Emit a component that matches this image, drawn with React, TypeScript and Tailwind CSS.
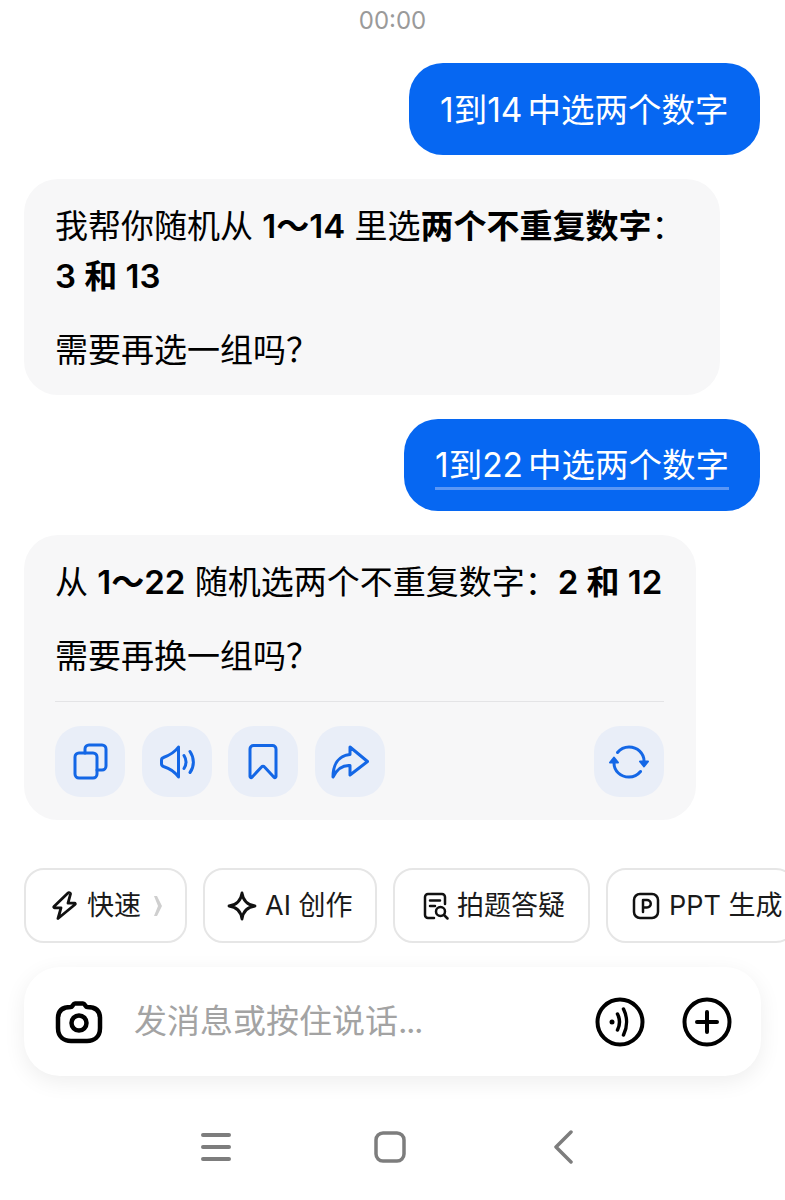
import React from "react";

const font = { fontFamily: '"Inter","Noto Sans CJK SC",sans-serif' };

const S = ({ children }: { children: React.ReactNode }) => (
  <svg width="40" height="40" viewBox="0 0 40 40" fill="none" stroke="#1467e6" strokeWidth="3" strokeLinecap="round" strokeLinejoin="round">
    {children}
  </svg>
);

const Action = ({ children }: { children: React.ReactNode }) => (
  <div className="w-[70px] h-[71px] rounded-[26px] bg-[#e9eef8] flex items-center justify-center">{children}</div>
);

const Chip = ({ icon, label, extra, cls }: { icon: React.ReactNode; label: string; extra?: React.ReactNode; cls: string }) => (
  <div className={`shrink-0 h-[75px] rounded-[20px] border-2 border-[#e6e6e6] bg-white flex items-center text-[27px] text-[#1a1a1a] ${cls}`}>
    {icon}
    <span className="whitespace-nowrap pt-[2px]">{label}</span>
    {extra}
  </div>
);

export default function App() {
  return (
    <div style={font} className="w-[785px] h-[1200px] bg-white overflow-hidden flex flex-col text-black">
      <div className="h-[41px] pt-[4px] text-center text-[24px] leading-[33px] text-[#9a9a9a]">00:00</div>

      <div className="flex justify-end pr-[25px] mt-[22px]">
        <div className="h-[92px] w-[351px] rounded-[34px] bg-[#0667f2] text-white text-[33.5px] pt-[2px] flex items-center pl-[31px] whitespace-nowrap">
          <span>1到14</span><span className="ml-[5px]">中选两个数字</span>
        </div>
      </div>

      <div className="ml-[24px] mt-[24px] w-[696px] h-[216px] rounded-[34px] bg-[#f7f7f8] pl-[31px] pt-[22px] text-[33px] leading-[50px]">
        <div className="whitespace-nowrap">我帮你随机从 <b className="font-semibold">1～14</b> 里选<b className="font-semibold">两个不重复数字</b>：</div>
        <div className="font-semibold">3 和 13</div>
        <div className="mt-[24px]">需要再选一组吗？</div>
      </div>

      <div className="flex justify-end pr-[25px] mt-[24px]">
        <div className="h-[92px] w-[356px] rounded-[34px] bg-[#0667f2] text-white text-[33.5px] flex items-center pl-[31px] whitespace-nowrap">
          <span className="border-b-[3px] border-[#5b97f5] leading-[44px] pt-[3px]">
            <span>1到22</span><span className="ml-[5px]">中选两个数字</span>
          </span>
        </div>
      </div>

      <div className="ml-[24px] mt-[24px] w-[672px] h-[285px] rounded-[34px] bg-[#f7f7f8] pl-[31px] pr-[32px] pt-[22px] text-[33px] leading-[50px]">
        <div className="whitespace-nowrap">从 <b className="font-semibold">1～22</b> 随机选两个不重复数字：<b className="font-semibold">2 和 12</b></div>
        <div className="mt-[24px]">需要再换一组吗？</div>
        <div className="h-px bg-[#e4e4e6] mt-[20px]" />
        <div className="flex justify-between mt-[24px]">
          <div className="flex gap-[16.5px]">
            <Action>
              <S>
                <rect x="5" y="11" width="22" height="25" rx="4" />
                <path d="M15 11V7a4 4 0 0 1 4-4h13a4 4 0 0 1 4 4v17a4 4 0 0 1-4 4h-5" />
              </S>
            </Action>
            <Action>
              <S>
                <path d="M21.500 5v30c-3.500-5-7-8-15-10.500a3 3 0 0 1-2-3v-3a3 3 0 0 1 2-3C13 13 18 10 21.500 5Z" />
                <path d="M27 13.500c2.500 4 2.500 9 0 13" />
                <path d="M33 9.500c4.500 6.500 4.500 15 0 21" />
              </S>
            </Action>
            <Action>
              <S>
                <path d="M7 7a3.500 3.500 0 0 1 3.500-3.500h19A3.500 3.500 0 0 1 33 7v27.500c0 1.200-1.200 1.500-2 .7L21.500 25a2 2 0 0 0-3 0L9 35.200c-.8.8-2 .5-2-.7Z" />
              </S>
            </Action>
            <Action>
              <S>
                <path d="M20 5l17.500 14.500L20 33V23.500C13 23 7 27 3 35 3 22 9 13.500 20 12.500Z" />
              </S>
            </Action>
          </div>
          <Action>
            <S>
              <path d="M8.500 10.500C11.500 6.800 15.500 5 20 5c8.500 0 15 6.500 15 14" />
              <path d="M5 21c0 8 6.500 14 15 14 4.500 0 8.500-1.800 11.500-5.500" />
              <path d="M31 19.500h8L35 24.500Z" fill="#1467e6" strokeWidth="2" />
              <path d="M1 20.500h8L5 15.500Z" fill="#1467e6" strokeWidth="2" />
            </S>
          </Action>
        </div>
      </div>

      <div className="flex gap-[16px] pl-[24px] mt-[48px] overflow-hidden">
        <Chip
          cls="w-[163px] pl-[24px]"
          label="快速"
          icon={
            <svg className="mr-[7px]" width="30" height="30" viewBox="0 0 30 30" fill="none" stroke="#111" strokeWidth="2.800" strokeLinejoin="round" strokeLinecap="round">
              <path d="M18 2 4 15.500c-.5.5-.2 1.300.5 1.300H11L8 27.500 25 13.500c.6-.5.3-1.300-.4-1.300H18L20.500 3C20.700 2 18.800 1.300 18 2Z" />
            </svg>
          }
          extra={
            <svg className="ml-[12px]" width="10" height="22" viewBox="0 0 10 22" fill="#cfcfcf">
              <path d="M1 1h3l5 10-5 10H1l4-10Z" />
            </svg>
          }
        />
        <Chip
          cls="w-[174px] pl-[22px]"
          label="AI 创作"
          icon={
            <svg className="mr-[8px]" width="30" height="30" viewBox="0 0 30 30" fill="none" stroke="#111" strokeWidth="2.800" strokeLinejoin="round" strokeLinecap="round">
              <path d="M15 2c1 7 5 12 13 13-8 1-12 6-13 13-1-7-5-12-13-13 8-1 12-6 13-13Z" />
            </svg>
          }
        />
        <Chip
          cls="w-[197px] pl-[27px]"
          label="拍题答疑"
          icon={
            <svg className="mr-[7px]" width="28" height="30" viewBox="0 0 28 30" fill="none" stroke="#111" strokeWidth="2.500" strokeLinejoin="round" strokeLinecap="round">
              <path d="M12 27H6a3 3 0 0 1-3-3V6a3 3 0 0 1 3-3h14a3 3 0 0 1 3 3v7" />
              <path d="M8 9.500h10M8 15h5" />
              <circle cx="18.500" cy="20.500" r="4.500" />
              <path d="M22 24l3.500 3.500" />
            </svg>
          }
        />
        <Chip
          cls="w-[190px] pl-[24px]"
          label="PPT 生成"
          icon={
            <svg className="mr-[9px]" width="28" height="28" viewBox="0 0 28 28" fill="none" stroke="#111" strokeWidth="2.500" strokeLinejoin="round" strokeLinecap="round">
              <rect x="2" y="2" width="24" height="24" rx="6" />
              <path d="M11 20V8h4a3.500 3.500 0 0 1 0 7.500h-4" />
            </svg>
          }
        />
      </div>

      <div className="ml-[24px] mt-[24px] w-[737px] h-[109px] rounded-[36px] bg-white shadow-[0_6px_22px_rgba(0,0,0,0.07)] flex items-center">
        <svg className="ml-[31px]" width="48" height="44" viewBox="0 0 48 44" fill="none" stroke="#000" strokeWidth="4.500" strokeLinejoin="round">
          <path d="M16 7c1.500 0 2-3.500 4-3.500h8c2 0 2.500 3.500 4 3.500 8 0 13 3 13 11v10c0 9-6 13-13 13H16C9 41 3 37 3 28V18C3 10 8 7 16 7Z" />
          <circle cx="24" cy="23" r="7.500" />
        </svg>
        <span className="ml-[31px] text-[33px] text-[#a3a3a3] whitespace-nowrap">发消息或按住说话<span className="tracking-[-1.500px]">...</span></span>
        <svg className="ml-auto" width="50" height="50" viewBox="0 0 50 50" fill="none" stroke="#000" strokeWidth="4" strokeLinecap="round">
          <circle cx="25" cy="25" r="22.500" />
          <circle cx="17" cy="25" r="2.500" fill="#000" stroke="none" />
          <path d="M22.500 17c2.500 5 2.500 11 0 16" strokeWidth="3.500" />
          <path d="M28.500 12c4 8 4 18 0 26" strokeWidth="3.500" />
        </svg>
        <svg className="ml-[37px] mr-[29px]" width="50" height="50" viewBox="0 0 50 50" fill="none" stroke="#000" strokeWidth="4" strokeLinecap="round">
          <circle cx="25" cy="25" r="22.500" />
          <path d="M25 15v20M15 25h20" />
        </svg>
      </div>

      <div className="flex items-center mt-[54px] pl-[200px]">
        <svg width="32" height="30" viewBox="0 0 32 30" fill="none" stroke="#7d7d7d" strokeWidth="4" strokeLinecap="round">
          <path d="M3 3h26M3 15h26M3 27h26" />
        </svg>
        <svg className="ml-[142px]" width="32" height="32" viewBox="0 0 32 32" fill="none" stroke="#7d7d7d" strokeWidth="3.500">
          <rect x="2" y="2" width="28" height="28" rx="7" />
        </svg>
        <svg className="ml-[146px]" width="22" height="34" viewBox="0 0 22 34" fill="none" stroke="#7d7d7d" strokeWidth="3.500" strokeLinecap="round" strokeLinejoin="round">
          <path d="M19 2 4 17l15 15" />
        </svg>
      </div>
    </div>
  );
}
